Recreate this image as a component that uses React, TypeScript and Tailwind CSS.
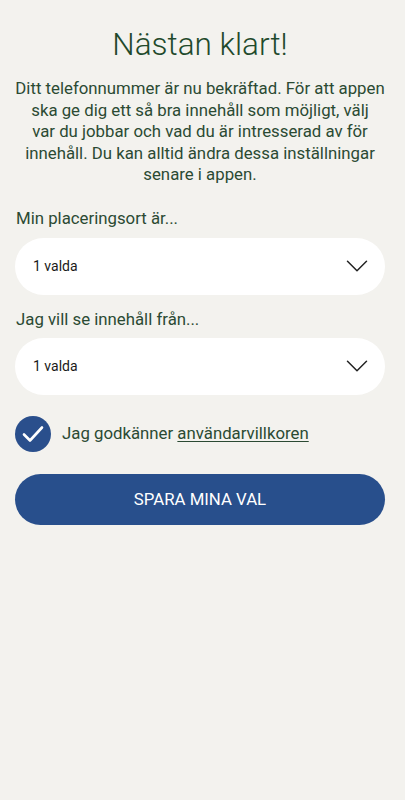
import React, { useState } from 'react';

function Chevron() {
  return (
    <svg width="22" height="12" viewBox="0 0 22 12" fill="none">
      <path d="M1.5 1.2l9.5 9.5 9.5-9.5" stroke="#222" strokeWidth="1.5" strokeLinecap="round" strokeLinejoin="round" />
    </svg>
  );
}

function Select({ value }: { value: string }) {
  return (
    <button className="flex h-[57px] w-full items-center justify-between rounded-full bg-white pl-[18px] pr-[17px] text-left">
      <span className="text-[14px] text-[#1a1a1a]">{value}</span>
      <Chevron />
    </button>
  );
}

export default function App() {
  const [accepted, setAccepted] = useState(true);

  return (
    <div
      className="min-h-[800px] bg-[#f3f2ee] pl-[15px] pr-[20px] pt-[24px]"
      style={{ fontFamily: 'Roboto, "Noto Sans", sans-serif' }}
    >
      {/* Header */}
      <h1 className="text-center text-[31.5px] font-light leading-[42px] text-[#1f4a2c]">Nästan klart!</h1>
      <p className="mt-[12px] text-center text-[16.8px] leading-[21.6px] text-[#2b4a33]">
        Ditt telefonnummer är nu bekräftad. För att appen
        <br />
        ska ge dig ett så bra innehåll som möjligt, välj
        <br />
        var du jobbar och vad du är intresserad av för
        <br />
        innehåll. Du kan alltid ändra dessa inställningar
        <br />
        senare i appen.
      </p>

      {/* Selects */}
      <label className="mt-[22px] block pl-[1px] text-[16.8px] leading-[20px] text-[#2b4a33]">Min placeringsort är...</label>
      <div className="mt-[10px]">
        <Select value="1 valda" />
      </div>
      <label className="mt-[14px] block pl-[1px] text-[16.8px] leading-[20px] text-[#2b4a33]">Jag vill se innehåll från...</label>
      <div className="mt-[9px]">
        <Select value="1 valda" />
      </div>

      {/* Terms */}
      <div className="mt-[21px] flex items-center gap-[11px]">
        <button
          onClick={() => setAccepted(!accepted)}
          className={`flex h-[36px] w-[36px] items-center justify-center rounded-full ${accepted ? 'bg-[#2a4f8c]' : 'border-2 border-[#2a4f8c]'}`}
        >
          {accepted && (
            <svg width="22" height="18" viewBox="0 0 22 18" fill="none">
              <path d="M2 9.5l6 6L20 2.5" stroke="white" strokeWidth="2.6" strokeLinecap="round" strokeLinejoin="round" />
            </svg>
          )}
        </button>
        <span className="text-[16.8px] text-[#2b4a33]">
          Jag godkänner <span className="underline underline-offset-2">användarvillkoren</span>
        </span>
      </div>

      <button className="mt-[22px] flex h-[51px] w-full items-center justify-center rounded-full bg-[#284f8c] text-[16.8px] font-normal text-white">
        SPARA MINA VAL
      </button>
    </div>
  );
}
